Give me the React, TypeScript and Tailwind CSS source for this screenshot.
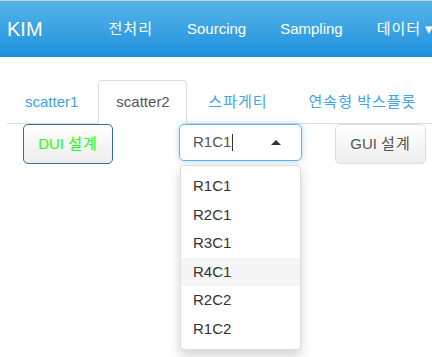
import React from "react"

const navItems = ["전처리", "Sourcing", "Sampling", "데이터"]
const tabs = ["scatter1", "scatter2", "스파게티", "연속형 박스플롯"]
const tabWidths = ["w-[91px]", "w-[89px]", "px-[18px]", "px-[19px]"]
const options = ["R1C1", "R2C1", "R3C1", "R4C1", "R2C2", "R1C2"]

const isKorean = (s: string) => /[\uac00-\ud7a3]/.test(s)

// hangul in the reference font is a full em wide, Noto CJK is a bit narrower
const K = ({ children }: { children: string }) =>
  isKorean(children) ? <span className="tracking-[1px]">{children}</span> : <>{children}</>

export default function App() {
  const activeTab = 1
  const hovered = 3

  return (
    <div
      className="relative h-[357px] w-[432px] overflow-hidden bg-white text-[15px]"
      style={{ fontFamily: '"Liberation Sans", Arial, "Noto Sans CJK KR", sans-serif' }}
    >
      <nav className="flex h-[57px] items-center whitespace-nowrap border-t border-[#c9d3da] bg-gradient-to-b from-[#55b5eb] to-[#1a90dc] text-white">
        <span className="ml-[7px] text-[20px]">KIM</span>
        <ul className="ml-[49px] flex">
          {navItems.map((item, i) => (
            <li key={item} className="px-[17px]">
              <K>{item}</K>
              {i === navItems.length - 1 && <span className="ml-[4px]">▾</span>}
            </li>
          ))}
        </ul>
      </nav>

      <ul className="ml-[7px] mt-[23px] flex whitespace-nowrap border-b border-[#dddddd]">
        {tabs.map((tab, i) => (
          <li
            key={tab}
            className={
              i === activeTab
                ? `-mb-px mr-[2px] rounded-t-[4px] border border-[#dddddd] border-b-white bg-white px-[17px] py-[11px] text-center leading-[20px] text-[#555555] ${tabWidths[i]}`
                : `-mb-px mr-[2px] border border-transparent px-[17px] py-[11px] text-center leading-[20px] text-[#3fa2ec] ${tabWidths[i]}`
            }
          >
            {tab.split(" ").map((w, j) => (
              <React.Fragment key={j}>
                {j > 0 && " "}
                <K>{w}</K>
              </React.Fragment>
            ))}
          </li>
        ))}
      </ul>

      <div className="relative flex items-start">
        <button className="ml-[23px] h-[40px] w-[90px] rounded-[5px] border border-[#2d6ea5] bg-gradient-to-b from-white to-[#ececec] text-[#1cff00]">
          DUI <K>설계</K>
        </button>

        <div className="ml-[66px] flex h-[37px] w-[123px] items-center rounded-[5px] border border-[#66afe9] pl-[13px] pr-[20px] text-[#555555] shadow-[0_0_6px_rgba(102,175,233,0.5)]">
          <span>R1C1</span>
          <span className="ml-[1px] h-[17px] w-px bg-[#333333]" />
          <span className="ml-auto h-0 w-0 border-x-[5px] border-b-[5px] border-x-transparent border-b-[#333333]" />
        </div>

        <button className="ml-[33px] h-[40px] w-[91px] rounded-[5px] border border-[#dddddd] bg-gradient-to-b from-white to-[#eeeeee] text-[#555555]">
          GUI <K>설계</K>
        </button>

        <ul className="absolute left-[180px] top-[41px] w-[121px] rounded-[4px] border border-[#dddddd] bg-white py-[6px] text-[#333333] shadow-[0_6px_12px_rgba(0,0,0,0.175)]">
          {options.map((opt, i) => (
            <li
              key={opt}
              className={
                i === hovered
                  ? "h-[28.5px] bg-[#f5f5f5] pl-[12px] leading-[28.5px]"
                  : "h-[28.5px] pl-[12px] leading-[28.5px]"
              }
            >
              {opt}
            </li>
          ))}
        </ul>
      </div>
    </div>
  )
}
